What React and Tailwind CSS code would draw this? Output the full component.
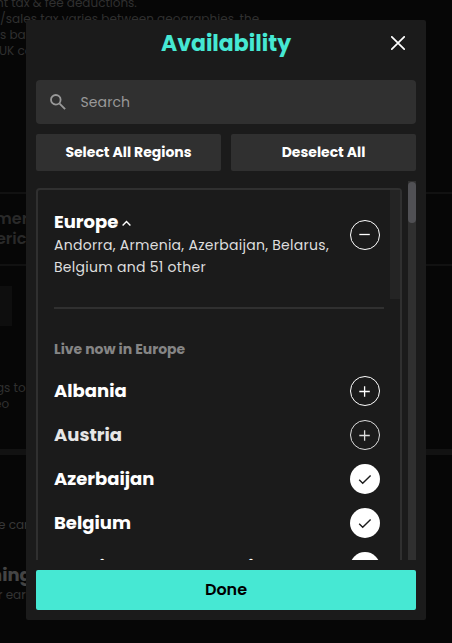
import React from "react";

const regions = [
  { name: "Albania", state: "add" },
  { name: "Austria", state: "add", dim: true },
  { name: "Azerbaijan", state: "on" },
  { name: "Belgium", state: "on" },
  { name: "Bosnia and Herzegovina", state: "on" },
];

function Toggle({ state, dim }) {
  const on = state === "on";
  return (
    <svg viewBox="0 0 30 30" fill="none" className={`block size-[30px] shrink-0 ${dim ? "opacity-85" : ""}`}>
      <circle cx="15" cy="15" r={on ? 15 : 14.5} fill={on ? "#fff" : "none"} stroke={on ? "none" : "#fff"} />
      {on ? (
        <path d="M9.2 15.8 12.7 19.2 20.6 11.4" stroke="#1b1b1b" strokeWidth="1.4" />
      ) : (
        <path d={state === "add" ? "M9.3 15.5h10.5M14.6 10.2v10.6" : "M9.3 14.5h10.5"} stroke="#fff" strokeWidth="1.3" />
      )}
    </svg>
  );
}

function Backdrop() {
  return (
    <div className="h-full w-full overflow-hidden whitespace-nowrap bg-[#060606] text-[#303030]">
      <div className="-mt-[5px] text-[12px] leading-[16px]">
        <p className="-ml-[4px]">nt tax &amp; fee deductions.</p>
        <p className="tracking-[0.04px]">/sales tax varies between geographies, the</p>
        <p>s based</p>
        <p className="-ml-[1px]">UK co</p>
      </div>
      <div className="mt-[133px] h-[74px] border-y-2 border-[#111] pt-[15px] text-[16px] font-semibold leading-[20px] text-[#292929]">
        <p className="-ml-[5px]">mer</p>
        <p className="-ml-[4px]">erica</p>
      </div>
      <div className="mt-[20px] h-[40px] w-[12px] bg-[#0e0e0e]" />
      <div className="mt-[54px] text-[12px] leading-[16px]">
        <p className="-ml-[4px]">gs to</p>
        <p className="-ml-[6px]">eo</p>
      </div>
      <div className="mt-[37px] h-[6px] bg-[#121212]" />
      <p className="-ml-[2px] mt-[62px] text-[12px] leading-[16px] text-[#383838]">e can</p>
      <p className="-ml-[10px] mt-[30px] text-[18px] font-bold leading-[24px] text-[#444]">ning</p>
      <p className="-ml-[2px] text-[12px] leading-[16px] text-[#343434]">r earn</p>
    </div>
  );
}

export default function App() {
  return (
    <div className="relative h-[643px] w-[452px] overflow-hidden font-['Poppins','Inter',sans-serif]">
      <Backdrop />
      <div className="absolute left-[26px] top-[20px] flex h-[600px] w-[400px] flex-col rounded-[2px] bg-[#1b1b1b] px-[10px] pb-[10px] text-white">
        <header className="flex h-[60px] shrink-0 items-start pt-[7px]">
          <div className="w-[52px]" />
          <h1 className="flex-1 pt-px text-center text-[22px] font-bold leading-[32px] text-[#46e8d3]">Availability</h1>
          <div className="flex h-[32px] w-[52px] justify-end pr-[11px]">
            <svg viewBox="0 0 14 14" className="mt-[9px] size-[14px]" fill="none" stroke="#fff" strokeWidth="1.7" strokeLinecap="round">
              <path d="M.8.8l12.4 12.4M13.2.8.8 13.2" />
            </svg>
          </div>
        </header>
        <div className="flex h-[44px] shrink-0 items-center rounded-[4px] bg-[#303030] pl-[14px]">
          <svg viewBox="0 0 16 16" className="size-[16px]" fill="none" stroke="#999" strokeWidth="1.8">
            <circle cx="5.8" cy="5.8" r="4.8" />
            <path d="m9.6 9.6 5.5 5.5" />
          </svg>
          <span className="ml-[14.5px] text-[14px] leading-[20px] tracking-[0.1px] text-[#999]">Search</span>
        </div>
        <div className="mt-[10px] grid h-[37px] shrink-0 grid-cols-2 gap-[10px] text-[14px] font-bold">
          <button className="rounded-[2px] bg-[#303030]">Select All Regions</button>
          <button className="rounded-[2px] bg-[#303030]">Deselect All</button>
        </div>
        <div className="mt-[10px] flex h-[379px] shrink-0 overflow-hidden">
          <section className="mr-[6px] mt-[7px] h-[500px] w-[366px] rounded-[4px] border-2 border-[#303030]">
            <div className="flex h-[109px]">
              <div className="flex-1 whitespace-nowrap pl-4 pt-[20px]">
                <h2 className="flex items-center text-[18px] font-bold leading-[24px]">
                  Europe
                  <svg viewBox="0 0 9 6" className="ml-[4px] mt-[2px] h-[6px] w-[9px]" fill="none" stroke="#fff" strokeWidth="1.4">
                    <path d="m.6 5.4 3.9-4 3.9 4" />
                  </svg>
                </h2>
                <p className="text-[14px] leading-[22px] tracking-[0.28px] text-[#dedede]">
                  Andorra, Armenia, Azerbaijan, Belarus,
                  <br />
                  Belgium and 51 other
                </p>
              </div>
              <div className="w-[40px] pt-[30px]">
                <Toggle state="remove" />
              </div>
              <div className="w-[10px] bg-[#242424]" />
            </div>
            <div className="ml-4 mt-[8px] h-[2px] w-[330px] bg-[#303030]" />
            <h3 className="ml-4 mt-[30px] text-[14px] font-bold leading-[20px] text-[#858585]">Live now in Europe</h3>
            <ul className="ml-4 mt-[10px] w-[326px]">
              {regions.map((r) => (
                <li key={r.name} className="flex h-[44px] items-center justify-between">
                  <span className={`whitespace-nowrap text-[18px] font-bold leading-[24px] ${r.dim ? "text-[#e6e6e6]" : ""}`}>{r.name}</span>
                  <Toggle state={r.state} dim={r.dim} />
                </li>
              ))}
            </ul>
          </section>
          <div className="w-[8px] bg-[#303030] pt-px">
            <div className="h-[41px] rounded-full bg-[#505054]" />
          </div>
        </div>
        <button className="mt-[10px] h-[40px] shrink-0 rounded-[2px] bg-[#46e8d3] pb-px text-[16px] font-semibold text-black">Done</button>
      </div>
    </div>
  );
}
